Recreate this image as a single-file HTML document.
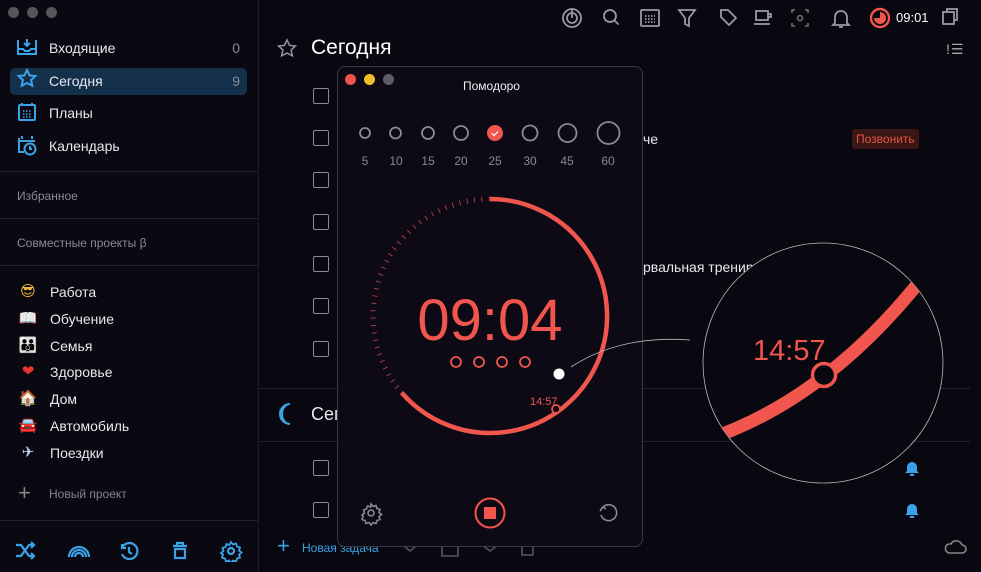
<!DOCTYPE html>
<html><head><meta charset="utf-8"><style>
*{margin:0;padding:0;box-sizing:border-box}
body{width:981px;height:572px;overflow:hidden;background:#09070f;font-family:"Liberation Sans","DejaVu Sans",sans-serif;color:#e8e8ee;position:relative}
.abs{position:absolute}
.side{left:0;top:0;width:259px;height:572px;border-right:1px solid #1f1d27;background:#0a0810}
.nav{left:10px;width:237px;height:27px;border-radius:5px;font-size:14px;line-height:27px;padding-left:39px}
.nav .c{position:absolute;right:7px;top:0;color:#8a8a95;font-size:14px}
.hr{height:1px;background:#23212b}
.sec{left:17px;font-size:12px;color:#8b8a94}
.proj{left:50px;font-size:14px}
.emo{left:18px;font-size:15px;width:20px;text-align:center;font-family:"DejaVu Sans",sans-serif}
.cb{width:16px;height:16px;border:1.6px solid #8a8a93;border-radius:2px;left:313px}
.pop{left:337px;top:66px;width:306px;height:481px;background:#0d0a15;border:1px solid #3a3842;border-radius:8px}
</style></head><body>
<div class="abs side"></div>
<div class="abs" style="left:8px;top:7px;width:11px;height:11px;border-radius:50%;background:#56555c"></div>
<div class="abs" style="left:27px;top:7px;width:11px;height:11px;border-radius:50%;background:#56555c"></div>
<div class="abs" style="left:46px;top:7px;width:11px;height:11px;border-radius:50%;background:#56555c"></div>

<div class="abs nav" style="top:35px">Входящие<span class="c">0</span></div>
<div class="abs nav" style="top:68px;background:#15304a">Сегодня<span class="c">9</span></div>
<div class="abs nav" style="top:100px">Планы</div>
<div class="abs nav" style="top:133px">Календарь</div>
<svg class="abs" style="left:16px;top:37px" width="22" height="120" fill="none" stroke="#3aa3e8" stroke-width="2">
<path d="M2 3v14h18V3M2 12h5l2 2h4l2-2h5M11 2v7M8 6l3 3 3-3"/>
<path d="M11 33l2.6 5.4 5.8.6-4.3 4 1.2 5.8L11 46l-5.3 2.8 1.2-5.8-4.3-4 5.8-.6z"/>
<rect x="3" y="68" width="16" height="15" rx="1"/><path d="M6 66v3M16 66v3" /><path d="M7 74h8M7 77h8M7 80h8" stroke-dasharray="1.5 1.5" stroke-width="1.5"/>
<path d="M3 101v14h5M3 104h16M6 99v3M16 99v3"/><circle cx="14" cy="112" r="5.5"/><path d="M14 109v3h2"/>
</svg>
<div class="abs hr" style="left:0;top:171px;width:258px"></div>
<div class="abs sec" style="top:189px">Избранное</div>
<div class="abs hr" style="left:0;top:218px;width:258px"></div>
<div class="abs sec" style="top:236px">Совместные проекты β</div>
<div class="abs hr" style="left:0;top:265px;width:258px"></div>
<div class="abs emo" style="top:282px;color:#f0b43a">😎</div><div class="abs proj" style="top:284px">Работа</div>
<div class="abs emo" style="top:309px;color:#ddd">📖</div><div class="abs proj" style="top:311px">Обучение</div>
<div class="abs emo" style="top:336px;color:#e0b040">👪</div><div class="abs proj" style="top:338px">Семья</div>
<div class="abs emo" style="top:362px;color:#e33">❤</div><div class="abs proj" style="top:364px">Здоровье</div>
<div class="abs emo" style="top:389px;color:#d9b07a">🏠</div><div class="abs proj" style="top:391px">Дом</div>
<div class="abs emo" style="top:416px;color:#e04848">🚘</div><div class="abs proj" style="top:418px">Автомобиль</div>
<div class="abs emo" style="top:443px;color:#b8d0e8">✈</div><div class="abs proj" style="top:445px">Поездки</div>
<div class="abs" style="left:18px;top:483px;font-size:22px;color:#888;line-height:20px">+</div>
<div class="abs" style="left:49px;top:487px;font-size:12px;color:#858490">Новый проект</div>
<div class="abs hr" style="left:0;top:520px;width:258px"></div>
<svg class="abs" style="left:14px;top:540px" width="235" height="22" fill="none" stroke="#3aa3e8" stroke-width="2.2">
<path d="M2 5h5l8 11h5M2 16h5l8-11h5M17 2l3 3-3 3M17 13l3 3-3 3"/>
<path d="M55 17a10 10 0 0 1 20 0M58 17a7 7 0 0 1 14 0M61 17a4 4 0 0 1 8 0"/>
<path d="M108 8a8 8 0 1 1 0 6M108 4v4h4M115 7v5l3 2"/>
<path d="M159 6h14M163 6V3h6v3M161 9h10v9h-10z"/>
<circle cx="217" cy="11" r="3"/><path d="M217 2l2 2.5 3-1 1 3 3 1-1 3 2.5 2-2.5 2 1 3-3 1-1 3-3-1-2 2.5-2-2.5-3 1-1-3-3-1 1-3L207 13l2.5-2-1-3 3-1 1-3 3 1z" stroke-width="1.8"/>
</svg>

<svg class="abs" style="left:560px;top:6px" width="410" height="24" fill="none" stroke="#9a9aa4" stroke-width="1.8">
<circle cx="12" cy="12" r="9"/><circle cx="12" cy="12" r="5"/><path d="M12 3v9"/>
<circle cx="50" cy="10" r="6"/><path d="M54.5 14.5l4 4"/>
<rect x="81" y="4" width="18" height="16" rx="1"/><path d="M85 10h10M85 13h10M85 16h10" stroke-dasharray="1.5 1.5"/>
<path d="M119 4h16l-6 8v8l-4-2v-6z"/>
<path d="M161 4h7l8 8-7 7-8-8z"/>
<path d="M196 5h12v9h-12zM208 8h3v3h-3M194 18h16"/>
<path d="M235 4h-3v3M245 4h3v3M235 20h-3v-3M245 20h3v-3" stroke="#666"/><circle cx="240" cy="12" r="2.5" stroke="#666"/>
<path d="M275 17V11a6 6 0 0 1 12 0v6l2 2h-16zM279 21h4"/>
<rect x="383" y="6" width="11" height="12"/><path d="M387 6V3h10v11h-3"/>
</svg>
<svg class="abs" style="left:868px;top:6px" width="24" height="24"><circle cx="12" cy="12" r="9" fill="none" stroke="#f0554e" stroke-width="2.4"/><path d="M12 12V6a6 6 0 1 1-6 6z" fill="#f0554e"/></svg>
<div class="abs" style="left:896px;top:10px;font-size:13px;color:#fff">09:01</div>
<div class="abs" style="left:946px;top:41px;font-size:14px;color:#aaa;letter-spacing:1px">!☰</div>

<svg class="abs" style="left:276px;top:38px" width="22" height="22" fill="none" stroke="#8a8f9a" stroke-width="1.6"><path d="M11 2l2.6 5.4 5.8.6-4.3 4 1.2 5.8L11 15l-5.3 2.8 1.2-5.8-4.3-4 5.8-.6z"/></svg>
<div class="abs" style="left:311px;top:36px;font-size:21px;color:#fff">Сегодня</div>
<div class="abs cb" style="top:88px"></div><div class="abs cb" style="top:130px"></div><div class="abs cb" style="top:172px"></div><div class="abs cb" style="top:214px"></div><div class="abs cb" style="top:256px"></div><div class="abs cb" style="top:298px"></div><div class="abs cb" style="top:341px"></div>
<div class="abs" style="left:643px;top:131px;font-size:14px">че</div>
<div class="abs" style="left:852px;top:129px;height:20px;padding:0 4px;line-height:20px;font-size:12px;color:#e8553f;background:#3a1614;border-radius:3px">Позвонить</div>
<div class="abs" style="left:643px;top:259px;font-size:14px">рвальная трениро</div>
<div class="abs hr" style="left:260px;top:388px;width:710px"></div>
<svg class="abs" style="left:276px;top:402px" width="20" height="24"><path d="M14 2a10 10 0 1 0 0 20a8 10 0 0 1 0-20z" fill="none" stroke="#3aa3e8" stroke-width="2"/></svg>
<div class="abs" style="left:311px;top:404px;font-size:18px">Сег</div>
<div class="abs hr" style="left:260px;top:441px;width:710px"></div>
<div class="abs cb" style="top:460px"></div><div class="abs cb" style="top:502px"></div>
<svg class="abs" style="left:904px;top:460px" width="16" height="60" fill="#3aa3e8"><path d="M3 11V7a5 5 0 0 1 10 0v4l2 2H1zM6 14h4v2H6z"/><path d="M3 53V49a5 5 0 0 1 10 0v4l2 2H1zM6 56h4v2H6z"/></svg>
<div class="abs" style="left:277px;top:535px;font-size:22px;color:#3aa3e8;line-height:22px">+</div>
<div class="abs" style="left:302px;top:541px;font-size:12px;color:#3aa3e8">Новая задача</div>
<svg class="abs" style="left:400px;top:540px" width="140" height="18" fill="none" stroke="#55545c" stroke-width="1.6"><path d="M4 6l6 5 6-5"/><rect x="42" y="4" width="16" height="12"/><path d="M82 5l8 6 8-6"/><rect x="122" y="4" width="11" height="11"/></svg>
<svg class="abs" style="left:943px;top:538px" width="24" height="18" fill="none" stroke="#888" stroke-width="1.6"><path d="M6 15h13a4 4 0 0 0 0-8 6 6 0 0 0-11-1 4.5 4.5 0 0 0-2 9z"/></svg>

<div class="abs pop"></div>
<div class="abs" style="left:345px;top:74px;width:11px;height:11px;border-radius:50%;background:#f0534d"></div>
<div class="abs" style="left:364px;top:74px;width:11px;height:11px;border-radius:50%;background:#f2bd2a"></div>
<div class="abs" style="left:383px;top:74px;width:11px;height:11px;border-radius:50%;background:#5e5d64"></div>
<div class="abs" style="left:463px;top:79px;font-size:12px;color:#eee">Помодоро</div>
<svg class="abs" style="left:0;top:0" width="981" height="572">
<g fill="none" stroke="#8a8a93" stroke-width="1.8">
<circle cx="365" cy="133" r="5"/><circle cx="395.5" cy="133" r="5.5"/><circle cx="428" cy="133" r="6"/><circle cx="461" cy="133" r="7"/><circle cx="530" cy="133" r="7.5"/><circle cx="567.5" cy="133" r="9"/><circle cx="608.5" cy="133" r="11"/>
</g>
<circle cx="495" cy="133" r="8" fill="#f0554e"/><path d="M491.5 133l2.5 2.5 4-4" fill="none" stroke="#fff" stroke-width="1.2"/>
<g font-size="12" fill="#8a8a93" text-anchor="middle" font-family="Liberation Sans,sans-serif">
<text x="365" y="165">5</text><text x="396" y="165">10</text><text x="428" y="165">15</text><text x="461" y="165">20</text><text x="495" y="165">25</text><text x="530" y="165">30</text><text x="567" y="165">45</text><text x="608" y="165">60</text></g>
<path d="M490 199A117 117 0 1 1 402 393" fill="none" stroke="#f0554e" stroke-width="4.5"/>
<path d="M402 393A117 117 0 0 1 490 199" fill="none" stroke="#f0554e" stroke-width="5" stroke-dasharray="0.9 6.5" opacity=".75"/>
<text x="490" y="340" font-size="58" fill="#f0554e" text-anchor="middle" font-family="Liberation Sans,sans-serif">09:04</text>
<g fill="none" stroke="#f0554e" stroke-width="1.8"><circle cx="456" cy="362" r="5"/><circle cx="479" cy="362" r="5"/><circle cx="502" cy="362" r="5"/><circle cx="525" cy="362" r="5"/></g>
<text x="530" y="405" font-size="11" fill="#f0554e" font-family="Liberation Sans,sans-serif">14:57</text>
<circle cx="556" cy="409" r="4" fill="#0d0a15" stroke="#f0554e" stroke-width="1.8"/>
<circle cx="559" cy="374" r="5.5" fill="#fff"/>
<path d="M571 367Q620 335 690 340" fill="none" stroke="#bbb" stroke-width=".8"/>
<g fill="none" stroke="#8a8a93" stroke-width="1.6"><circle cx="371" cy="513" r="3"/><path d="M371 504l2 2.5 3-1 1 3 3 1-1 3 2.5 2-2.5 2 1 3-3 1-1 3-3-1-2 2.5-2-2.5-3 1-1-3-3-1 1-3L362 515l2.5-2-1-3 3-1 1-3 3 1z"/>
<path d="M603 507a8 8 0 1 1-2 8"/><path d="M600 511l3-4 3 2" /></g>
<circle cx="490" cy="513" r="14.5" fill="none" stroke="#f0554e" stroke-width="2"/><rect x="484" y="507" width="12" height="12" fill="#f0554e"/>
<defs><clipPath id="mc"><circle cx="823" cy="363" r="120"/></clipPath></defs>
<circle cx="823" cy="363" r="120" fill="#09070f" stroke="#bbb" stroke-width=".8"/>
<g clip-path="url(#mc)">
<path d="M690 445Q830 405 940 255" fill="none" stroke="#f0554e" stroke-width="13"/>
<text x="753" y="360" font-size="29" fill="#f0554e" font-family="Liberation Sans,sans-serif">14:57</text>
<circle cx="824" cy="375" r="11.5" fill="#09070f" stroke="#f0554e" stroke-width="3.5"/>
</g>
</svg>
</body></html>
